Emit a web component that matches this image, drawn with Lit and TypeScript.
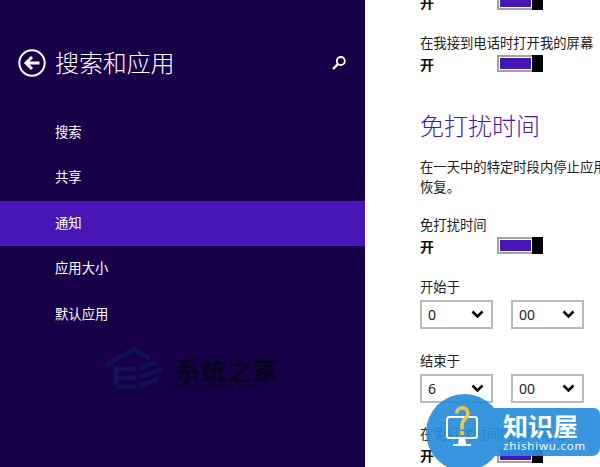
import { LitElement, html, css, svg } from 'lit';
import { customElement } from 'lit/decorators.js';

const NAV = ['搜索', '共享', '通知', '应用大小', '默认应用'];

const chevron = svg`<svg class="chev" width="13" height="9" viewBox="0 0 13 9"><path d="M1.5 1.5 6.5 6.5 11.5 1.5" fill="none" stroke="#000" stroke-width="2.6"/></svg>`;

@customElement('app-root')
export class AppRoot extends LitElement {
  static styles = css`
    :host {
      display: block;
      position: relative;
      width: 600px;
      height: 467px;
      overflow: hidden;
      font-family: "Noto Sans", "Noto Sans CJK SC", sans-serif;
      background: #fff;
    }
    .screen { display: flex; height: 467px; }

    /* left settings pane */
    .side {
      position: relative;
      flex: 0 0 365px;
      background: #170048;
      color: #fff;
    }
    .head {
      display: flex;
      align-items: center;
      height: 36px;
      padding: 45px 18px 0 18px;
    }
    .head h1 {
      flex: 1;
      margin: 0 0 0 9px;
      font-size: 24px;
      font-weight: 300;
      line-height: 36px;
      letter-spacing: -0.1px;
    }
    .nav { margin-top: 28.5px; }
    .nav div {
      height: 45.6px;
      line-height: 44px;
      padding-left: 55px;
      font-size: 13.33px;
    }
    .nav .on { background: #4617b4; }

    .mark { position: absolute; left: 104px; top: 346px; }
    .mark-cn {
      position: absolute;
      left: 175px;
      top: 355px;
      font-size: 25px;
      font-weight: 700;
      line-height: 30px;
      white-space: nowrap;
      letter-spacing: 1px;
      color: #07001f;
    }
    .mark-en {
      position: absolute;
      left: 166px;
      top: 382px;
      font-family: "Liberation Serif", serif;
      font-size: 9px;
      font-weight: 700;
      letter-spacing: 0.8px;
      white-space: nowrap;
      color: #0a002c;
    }

    /* right settings pane */
    .main {
      flex: 1;
      min-width: 0;
      overflow: hidden;
      padding-left: 55px;
      margin-top: -29px;
      font-size: 13.33px;
      color: #222;
      white-space: nowrap;
    }
    .label { height: 20px; line-height: 20px; }
    .toggle-row {
      display: flex;
      align-items: center;
      height: 17px;
      margin-top: 2px;
    }
    .state { width: 77px; font-size: 14px; font-weight: 700; color: #111; }
    .toggle {
      display: flex;
      box-sizing: border-box;
      width: 46px;
      height: 17px;
      border: 2px solid #a3a3a3;
      border-right: 0;
      background: #fff;
    }
    .toggle i { flex: 1; margin: 1px; background: #4617b4; }
    .toggle b { width: 11px; margin: -2px 0; background: #000; }
    .group { margin-top: 23px; }
    h2 {
      margin: 38px 0 0;
      font-size: 24px;
      font-weight: 300;
      line-height: 32px;
      color: #4617b4;
    }
    .desc { margin-top: 16px; line-height: 19.5px; }
    .selects { display: flex; gap: 18px; margin-top: 3px; }
    .select {
      display: flex;
      align-items: center;
      justify-content: space-between;
      box-sizing: border-box;
      width: 73px;
      height: 29px;
      padding: 0 7px 0 6px;
      border: 2px solid #bababa;
      font-size: 14px;
      color: #222;
    }
    .late { margin-top: 22px; }
    .later { margin-top: 21px; }
    .first-toggle { margin-top: 18px; }

    /* site badge over the corner */
    .badge { position: absolute; left: 0; top: 0; width: 600px; height: 467px; pointer-events: none; }
    .shape { position: absolute; inset: 0; opacity: 0.92; }
    .pill {
      position: absolute;
      left: 465px;
      top: 408px;
      width: 135px;
      height: 48px;
      border-radius: 0 6px 8px 0;
      background: #298edc;
    }
    .disc {
      position: absolute;
      left: 426px;
      top: 394px;
      width: 77px;
      height: 77px;
      border-radius: 50%;
      background: #298edc;
    }
    .icon { position: absolute; left: 445px; top: 405px; }
    .b-cn {
      position: absolute;
      left: 503px;
      top: 410px;
      font-size: 25px;
      font-weight: 700;
      line-height: 32px;
      color: #fff;
      white-space: nowrap;
    }
    .b-en {
      position: absolute;
      left: 503px;
      top: 439px;
      font-family: "Open Sans", sans-serif;
      font-size: 11.5px;
      line-height: 14px;
      letter-spacing: 0.85px;
      color: #fff;
      white-space: nowrap;
    }
  `;

  private _toggle() {
    return html`<div class="toggle-row"><span class="state">开</span><span class="toggle"><i></i><b></b></span></div>`;
  }

  private _selects(a: string, b: string) {
    return html`<div class="selects">
      <div class="select"><span>${a}</span>${chevron}</div>
      <div class="select"><span>${b}</span>${chevron}</div>
    </div>`;
  }

  render() {
    return html`
      <div class="screen">
        <section class="side">
          <div class="head">
            <svg width="28" height="28" viewBox="0 0 28 28">
              <circle cx="14" cy="14" r="12.7" fill="none" stroke="#fff" stroke-width="2"/>
              <path d="M21.5 14H8.5M14 8 8 14l6 6" fill="none" stroke="#fff" stroke-width="3"/>
            </svg>
            <h1>搜索和应用</h1>
            <svg width="16" height="16" viewBox="0 0 16 16">
              <circle cx="9.8" cy="6" r="4" fill="none" stroke="#fff" stroke-width="1.8"/>
              <path d="M7 9 2 14" stroke="#fff" stroke-width="2.4"/>
            </svg>
          </div>
          <nav class="nav">
            ${NAV.map((n) => html`<div class=${n === '通知' ? 'on' : ''}>${n}</div>`)}
          </nav>
        </section>
        <section class="main">
          <div class="label">在我收到通知时打开我的屏幕</div>
          ${this._toggle()}
          <div class="group label">在我接到电话时打开我的屏幕</div>
          ${this._toggle()}
          <h2>免打扰时间</h2>
          <div class="desc">在一天中的特定时段内停止应用通知的显示和声音<br />恢复。</div>
          <div class="label first-toggle">免打扰时间</div>
          ${this._toggle()}
          <div class="group label">开始于</div>
          ${this._selects('0', '00')}
          <div class="label late">结束于</div>
          ${this._selects('6', '00')}
          <div class="label later">在免打扰时间内接听电话</div>
          ${this._toggle()}
        </section>
      </div>

      <svg class="mark" width="64" height="46" viewBox="0 0 64 46">
        <path d="M1 20 30 3 46 13M12 20V40M12 23h20M12 32h20M12 41h20M36 22 52 16M36 31 58 23M36 40 54 33" fill="none" stroke="#12125a" stroke-width="4.5"/>
      </svg>
      <div class="mark-cn">系统之家</div>
      <div class="mark-en">XITONGZHIJIA.NET</div>

      <div class="badge">
        <div class="shape">
          <div class="pill"></div>
          <div class="disc"></div>
        </div>
        <svg class="icon" width="40" height="44" viewBox="0 0 40 44">
          <rect x="2" y="12" width="30" height="21" rx="2.5" fill="none" stroke="#fff" stroke-width="2"/>
          <path d="M14 33h6l1 6h5v2H8v-2h5z" fill="#fff"/>
          <path d="M11.5 8.5c0-7.5 11.5-7.5 11.5 0 0 5-6 5-6 12v4" fill="none" stroke="#f6c33c" stroke-width="3.6"/>
          <rect x="15" y="26" width="4.2" height="4.2" fill="#f6c33c"/>
        </svg>
        <div class="b-cn">知识屋</div>
        <div class="b-en">zhishiwu.com</div>
      </div>
    `;
  }
}

declare global {
  interface HTMLElementTagNameMap {
    'app-root': AppRoot;
  }
}
